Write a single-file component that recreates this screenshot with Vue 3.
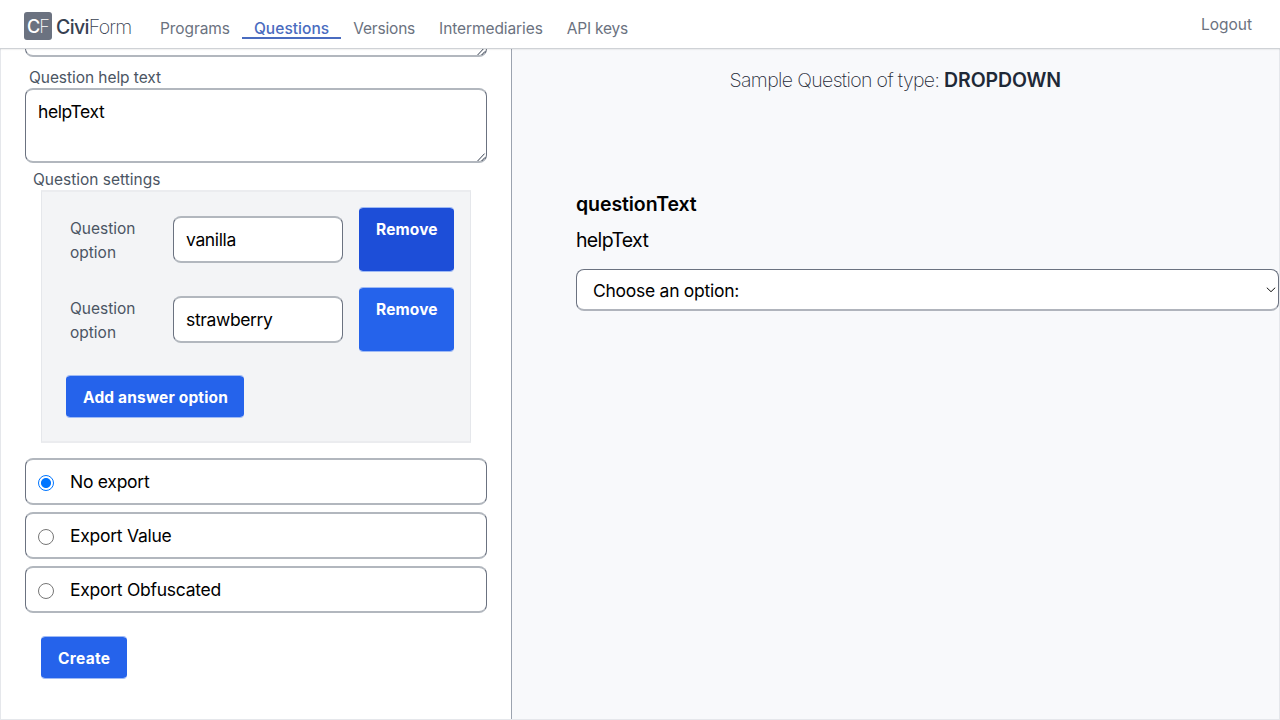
<script setup>
import { ref } from 'vue'

const navItems = [
  { label: 'Programs', cls: 'programs' },
  { label: 'Questions', cls: 'questions active' },
  { label: 'Versions', cls: 'versions' },
  { label: 'Intermediaries', cls: 'intermediaries' },
  { label: 'API keys', cls: 'api-keys' },
]

const options = ref([
  { value: 'vanilla', hovered: true },
  { value: 'strawberry', hovered: false },
])

const exportChoices = ['No export', 'Export Value', 'Export Obfuscated']
const selectedExport = ref('No export')
</script>

<template>
  <div class="page">
    <header class="header">
      <div class="mark"><b>C</b><i>F</i></div>
      <div class="brand"><b>Civi</b><i>Form</i></div>
      <nav class="nav">
        <a v-for="n in navItems" :key="n.label" class="nav-link" :class="n.cls">{{ n.label }}</a>
      </nav>
      <a class="logout">Logout</a>
    </header>

    <main class="columns">
      <section class="form">
        <div class="field area previous">
          <svg class="grip" viewBox="0 0 9 9"><path d="M0.6 8 L7.6 0.6 M4.6 8 L8 4.4" /></svg>
        </div>
        <label class="label help-label">Question help text</label>
        <div class="field area help">
          <span class="help-value">helpText</span>
          <svg class="grip" viewBox="0 0 9 9"><path d="M0.6 8 L7.6 0.6 M4.6 8 L8 4.4" /></svg>
        </div>
        <label class="label settings-label">Question settings</label>

        <div class="settings">
          <div v-for="o in options" :key="o.value" class="option-row">
            <label class="option-label">Question<br />option</label>
            <div class="field option-input">{{ o.value }}</div>
            <button class="btn remove" :class="{ hovered: o.hovered }">Remove</button>
          </div>
          <button class="btn add">Add answer option</button>
        </div>

        <div class="choices">
          <div v-for="c in exportChoices" :key="c" class="field choice">
            <span class="radio" :class="{ on: c === selectedExport }"></span>
            <span>{{ c }}</span>
          </div>
        </div>
        <button class="btn create">Create</button>
      </section>

      <section class="preview">
        <h1 class="title"><span class="thin">Sample Question of type: </span><b>DROPDOWN</b></h1>
        <div class="question">questionText</div>
        <div class="question-help">helpText</div>
        <div class="select">
          <span>Choose an option:</span>
          <svg class="chevron" viewBox="0 0 10 6"><path d="M0.8 0.7 L5 4.7 L9.2 0.7" /></svg>
        </div>
      </section>
    </main>
  </div>
</template>

<style>
body {
  margin: 0;
  background: #fff;
}
</style>

<style scoped>
.page {
  width: 1280px;
  height: 720px;
  overflow: hidden;
  display: flex;
  flex-direction: column;
  font-family: Inter, 'Liberation Sans', sans-serif;
  font-size: 15.5px;
  line-height: 24px;
  color: #000;
}
.page * {
  box-sizing: border-box;
}
i {
  font-style: normal;
}

.header {
  flex: none;
  height: 49px;
  display: flex;
  align-items: flex-start;
  padding: 0 28px 0 24px;
  background: #fff;
  border-bottom: 1px solid #cfd2d6;
  box-shadow: 0 1px 1px rgba(0, 0, 0, 0.05);
  color: #6b7280;
  position: relative;
  z-index: 1;
}
.mark {
  width: 28px;
  height: 28px;
  margin-top: 12px;
  padding-left: 3px;
  border-radius: 3px;
  background: #6b7280;
  color: #fff;
  font-size: 18px;
  line-height: 29px;
  white-space: nowrap;
}
.mark b {
  font-weight: 500;
  letter-spacing: -0.9px;
}
.mark i {
  font-weight: 200;
}
.brand {
  width: 80px;
  margin: 13px 0 0 4px;
  font-size: 19.5px;
  line-height: 28px;
  color: #374151;
  white-space: nowrap;
}
.brand b {
  font-weight: 500;
  letter-spacing: -0.65px;
}
.brand i {
  font-weight: 200;
  letter-spacing: -0.75px;
}
.nav {
  display: flex;
  margin: 16px 0 0 12px;
}
.nav-link {
  height: 23px;
  padding: 1px 12px 0;
  white-space: nowrap;
}
.programs { letter-spacing: -0.085px; }
.questions { letter-spacing: 0.05px; }
.versions { letter-spacing: -0.19px; }
.intermediaries { letter-spacing: -0.091px; }
.api-keys { letter-spacing: -0.22px; }
.active {
  color: #4a6cc0;
  font-weight: 500;
  border-bottom: 2px solid #4a6cc0;
}
.logout {
  margin: 13px 0 0 auto;
}

.columns {
  flex: 1;
  display: flex;
  min-height: 0;
  border: 1px solid #e5e7eb;
  border-top: 0;
}
.form {
  width: 511px;
  padding: 0 24px;
  border-right: 1px solid #9ca3af;
  background: #fff;
}
.field {
  border: 2px solid #b2b7be;
  border-left: 1px solid #6b7280;
  border-right: 1px solid #6b7280;
  border-radius: 8px;
  background: #fff;
  font-size: 17.5px;
  letter-spacing: -0.36px;
}
.area {
  position: relative;
  height: 75px;
  padding: 10px 12px;
}
.help-value {
  letter-spacing: -0.4px;
}
.grip {
  position: absolute;
  right: 0;
  bottom: -1px;
  width: 9px;
  height: 9px;
}
.grip path {
  fill: none;
  stroke: #374151;
  stroke-width: 1;
}
.previous {
  margin-top: -67px;
}
.label {
  display: block;
  color: #4b5563;
}
.help-label {
  margin: 9px 0 0 4px;
  letter-spacing: -0.063px;
}
.help {
  margin-top: -2px;
}
.settings-label {
  margin: 5px 0 0 8px;
}

.settings {
  height: 253px;
  margin: -2px 16px 0;
  padding: 15px 16px 0 24px;
  border: 2px solid #ebecef;
  border-left: 1px solid #e5e7eb;
  border-right: 1px solid #e5e7eb;
  background: #f3f4f6;
}
.option-row {
  display: flex;
  height: 65px;
  margin-bottom: 15px;
}
.option-label {
  width: 107px;
  padding: 10px 0 0 4px;
  color: #4b5563;
}
.option-input {
  width: 170px;
  height: 47px;
  margin: 9px 16px 0 0;
  padding: 10px 12px;
}
.btn {
  display: block;
  border: 0 solid #9fbaf5;
  border-width: 1px 0;
  border-radius: 4px;
  padding: 9px 17px 7px;
  background: #2563eb;
  background-clip: padding-box;
  color: #fff;
  font: 700 15.5px/24px Inter, 'Liberation Sans', sans-serif;
  white-space: nowrap;
}
.remove {
  width: 95px;
  height: 65px;
  padding-top: 10px;
  letter-spacing: 0.143px;
  display: flex;
  align-items: flex-start;
}
.remove.hovered {
  background: #1d4ed8;
  background-clip: padding-box;
}
.add {
  width: 178px;
  height: 43px;
  margin-top: 23px;
  letter-spacing: 0.162px;
}

.choices {
  display: flex;
  flex-direction: column;
  gap: 7px;
  margin-top: 15px;
}
.choice {
  display: flex;
  height: 47px;
  padding: 10px 12px;
  gap: 16px;
  letter-spacing: -0.26px;
}
.radio {
  width: 16px;
  height: 16px;
  margin-top: 5px;
  border: 1px solid #767676;
  border-radius: 50%;
}
.radio.on {
  border-color: #0075ff;
  background: radial-gradient(circle, #0075ff 4.6px, #fff 5.4px);
}
.create {
  width: 86px;
  height: 43px;
  margin: 23px 0 0 16px;
  letter-spacing: 0.29px;
}

.preview {
  flex: 1;
  padding-left: 64px;
  background: #f8f9fb;
}
.title {
  margin: 17px 0 0 153.5px;
  font-size: 19.5px;
  line-height: 28px;
  font-weight: 600;
  color: #1f2937;
  white-space: pre;
}
.thin {
  font-weight: 200;
  letter-spacing: -0.64px;
}
.title b {
  font-weight: 600;
  letter-spacing: -0.1px;
}
.question {
  margin-top: 96px;
  font-size: 19.5px;
  font-weight: 600;
  line-height: 28px;
  letter-spacing: -0.08px;
}
.question-help {
  margin-top: 8px;
  font-size: 19.5px;
  line-height: 28px;
  letter-spacing: -0.66px;
}
.select {
  position: relative;
  height: 42px;
  margin-top: 15px;
  padding: 9px 16px;
  border: 1px solid #6b7280;
  border-bottom: 2px solid #b0b4bc;
  border-radius: 8px;
  background: #fff;
  font-size: 17.5px;
  letter-spacing: -0.272px;
}
.chevron {
  position: absolute;
  right: 2.5px;
  top: 17px;
  width: 10px;
  height: 6px;
}
.chevron path {
  fill: none;
  stroke: #111;
  stroke-width: 1;
}
</style>
